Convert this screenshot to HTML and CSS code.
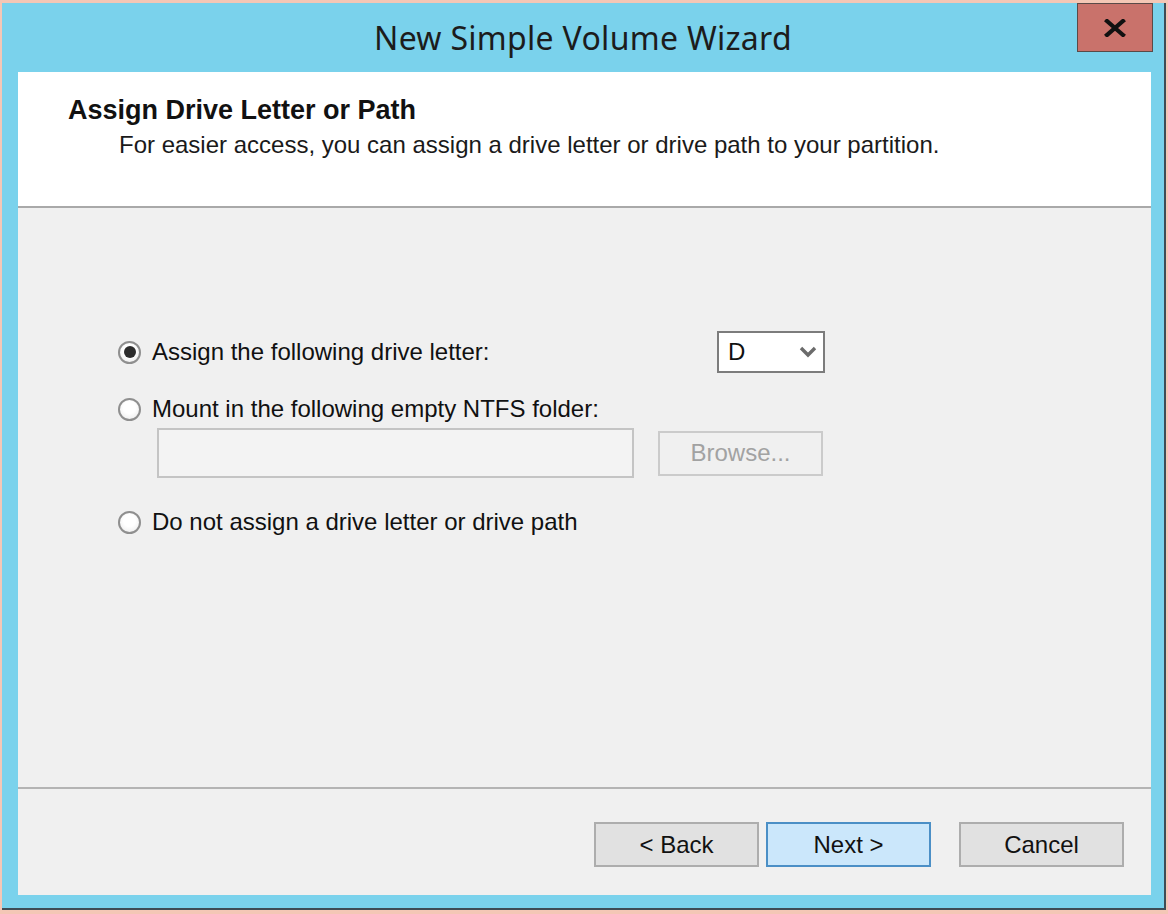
FILE: index.html
```html
<!DOCTYPE html>
<html>
<head>
<meta charset="utf-8">
<link rel="stylesheet" href="styles.css">
</head>
<body>
<div class="window">
  <div class="titlebar">
    <div class="title">New Simple Volume Wizard</div>
    <div class="close">
      <svg width="22" height="18" viewBox="0 0 22 18"><path d="M3 2 L19 16 M19 2 L3 16" stroke="#111" stroke-width="4.2" stroke-linecap="square"/></svg>
    </div>
  </div>
  <div class="client">
    <div class="header">
      <div class="heading">Assign Drive Letter or Path</div>
      <div class="subtitle">For easier access, you can assign a drive letter or drive path to your partition.</div>
    </div>
    <div class="body">
      <div class="options">
        <div class="row row-first">
          <div class="radio-label"><span class="radio checked"></span><span>Assign the following drive letter:</span></div>
          <div class="combo"><span>D</span>
            <svg width="18" height="12" viewBox="0 0 18 12"><path d="M2 2 L9 9 L16 2" fill="none" stroke="#6b6b6b" stroke-width="3.4"/></svg>
          </div>
        </div>
        <div class="row row-mount">
          <div class="radio-label"><span class="radio"></span><span>Mount in the following empty NTFS folder:</span></div>
        </div>
        <div class="row row-path">
          <div class="textbox"></div>
          <div class="btn btn-disabled">Browse...</div>
        </div>
        <div class="row row-none">
          <div class="radio-label"><span class="radio"></span><span>Do not assign a drive letter or drive path</span></div>
        </div>
      </div>
    </div>
    <div class="footer">
      <div class="btn btn-back">&lt; Back</div>
      <div class="btn btn-next">Next &gt;</div>
      <div class="btn btn-cancel">Cancel</div>
    </div>
  </div>
</div>
</body>
</html>
```

FILE: styles.css
```css
html, body {
  margin: 0;
  padding: 0;
}
body {
  background: #f4c7b6;
  width: 1168px;
  height: 914px;
  overflow: hidden;
  font-family: "Liberation Sans", Arial, sans-serif;
  color: #111;
}
.window {
  margin: 3px 0 0 2px;
  width: 1164px;
  height: 907px;
  background: #7ad2ec;
  border-right: 2px solid #3e4c56;
  border-bottom: 2px solid #3e4c56;
  box-sizing: border-box;
  display: flex;
  flex-direction: column;
}
.titlebar {
  position: relative;
  height: 69px;
  display: flex;
  align-items: center;
  justify-content: center;
}
.title {
  font-family: "Noto Sans", "Open Sans", sans-serif;
  font-size: 32px;
  color: #1c1c1c;
  margin-top: 0px;
  letter-spacing: 0.3px;
}
.close {
  position: absolute;
  top: 0;
  right: 11px;
  width: 74px;
  height: 47px;
  background: #c9726b;
  border: 1px solid #5a4a48;
  display: flex;
  align-items: center;
  justify-content: center;
}
.client {
  margin: 0 13px 0 16px;
  height: 823px;
  display: flex;
  flex-direction: column;
  background: #f0f0f0;
}
.header {
  background: #fff;
  height: 134px;
  border-bottom: 2px solid #a9a9a9;
  box-sizing: content-box;
  padding-left: 50px;
}
.heading {
  font-weight: bold;
  font-size: 27px;
  margin-top: 23px;
  line-height: 30px;
}
.subtitle {
  font-size: 24px;
  line-height: 28px;
  margin-top: 6px;
  padding-left: 51px;
  color: #1a1a1a;
}
.body {
  height: 579px;
  border-bottom: 2px solid #b4b4b4;
  background: #f0f0f0;
}
.options {
  padding: 123px 0 0 100px;
  font-size: 24px;
  line-height: 28px;
}
.row {
  display: flex;
  align-items: center;
}
.row-first {
  height: 42px;
}
.radio-label {
  display: flex;
  align-items: center;
  width: 599px;
}
.radio {
  width: 19px;
  height: 19px;
  border-radius: 50%;
  border: 2px solid #8f8f8f;
  background: radial-gradient(circle at 50% 40%, #ffffff 40%, #e8e8e8 100%);
  margin-right: 11px;
  position: relative;
  flex: none;
}
.radio.checked::after {
  content: "";
  position: absolute;
  left: 3.5px;
  top: 3.5px;
  width: 12px;
  height: 12px;
  border-radius: 50%;
  background: #2c2c2c;
}
.combo {
  width: 108px;
  height: 42px;
  box-sizing: border-box;
  border: 2px solid #7c7c7c;
  background: #fff;
  display: flex;
  align-items: center;
  justify-content: space-between;
  padding: 0 6px 0 9px;
  font-size: 24px;
}
.row-mount {
  margin-top: 22px;
  height: 28px;
}
.row-path {
  margin-top: 5px;
  padding-left: 39px;
  height: 50px;
}
.textbox {
  width: 477px;
  height: 50px;
  box-sizing: border-box;
  border: 2px solid #c4c4c4;
  background: #f3f3f3;
}
.btn {
  width: 165px;
  height: 45px;
  box-sizing: border-box;
  display: flex;
  align-items: center;
  justify-content: center;
  font-size: 24px;
  border: 2px solid #adadad;
  background: #e1e1e1;
  color: #111;
}
.btn-disabled {
  margin-left: 24px;
  background: #f0f0f0;
  border-color: #cbcbcb;
  color: #a2a2a2;
}
.row-none {
  margin-top: 30px;
  height: 28px;
}
.footer {
  flex: 1;
  display: flex;
  justify-content: flex-end;
  align-items: flex-start;
  padding: 33px 27px 0 0;
}
.btn-next {
  margin-left: 7px;
  background: #cbe7fb;
  border-color: #4b8fc6;
}
.btn-cancel {
  margin-left: 28px;
}
```
